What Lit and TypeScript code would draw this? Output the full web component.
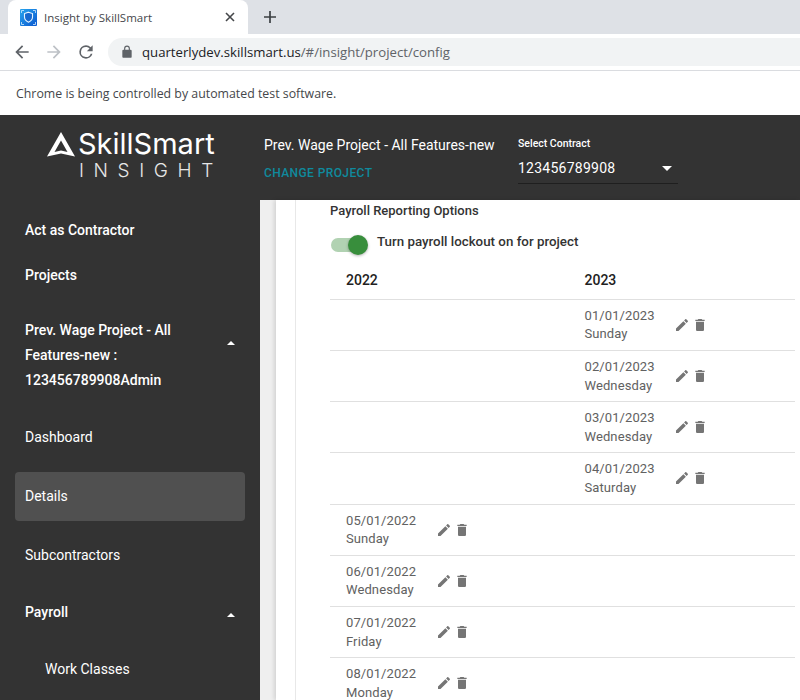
import { LitElement, html, css, svg } from 'lit'
import { customElement } from 'lit/decorators.js'

const editIcon = svg`<path d="M3 17.25V21h3.75L17.81 9.94l-3.75-3.75L3 17.25zM20.71 7.04c.39-.39.39-1.02 0-1.41l-2.34-2.34c-.39-.39-1.02-.39-1.41 0l-1.83 1.83 3.75 3.75 1.83-1.83z"/>`
const trashIcon = svg`<path d="M6 19c0 1.1.9 2 2 2h8c1.1 0 2-.9 2-2V7H6v12zM19 4h-3.5l-1-1h-5l-1 1H5v2h14V4z"/>`

interface LockRow {
  year: 2022 | 2023
  date: string
  day: string
}

const rows: LockRow[] = [
  { year: 2023, date: '01/01/2023', day: 'Sunday' },
  { year: 2023, date: '02/01/2023', day: 'Wednesday' },
  { year: 2023, date: '03/01/2023', day: 'Wednesday' },
  { year: 2023, date: '04/01/2023', day: 'Saturday' },
  { year: 2022, date: '05/01/2022', day: 'Sunday' },
  { year: 2022, date: '06/01/2022', day: 'Wednesday' },
  { year: 2022, date: '07/01/2022', day: 'Friday' },
  { year: 2022, date: '08/01/2022', day: 'Monday' },
]

@customElement('app-root')
export class AppRoot extends LitElement {
  static override styles = css`
    :host {
      display: flex;
      flex-direction: column;
      width: 800px;
      height: 700px;
      overflow: hidden;
      background: #fff;
      font-family: Roboto, sans-serif;
    }

    /* browser chrome */
    .tabstrip {
      flex: none;
      height: 34px;
      background: #dee1e6;
      display: flex;
      align-items: flex-end;
      padding-left: 8px;
    }
    .tab {
      width: 240px;
      height: 34px;
      box-sizing: border-box;
      background: #fff;
      border-radius: 8px 8px 0 0;
      display: flex;
      align-items: center;
      padding: 0 13px 0 12px;
      font: 11.5px 'Open Sans', sans-serif;
      color: #45474a;
    }
    .tab .fav {
      width: 17px;
      height: 17px;
      margin-right: 7px;
    }
    .tab .title {
      flex: 1;
    }
    .tab .close {
      width: 10px;
      height: 10px;
    }
    .newtab {
      width: 12px;
      height: 12px;
      margin: 0 0 11px 16px;
    }
    .toolbar {
      flex: none;
      height: 37px;
      box-sizing: border-box;
      border-bottom: 1px solid #dadce0;
      display: flex;
      align-items: center;
      padding: 0 0 0 12px;
      gap: 12px;
    }
    .toolbar > svg {
      width: 20px;
      height: 20px;
      flex: none;
    }
    .omnibox {
      flex: 1;
      height: 28px;
      background: #f1f3f4;
      border-radius: 14px 0 0 14px;
      display: flex;
      align-items: center;
      padding-left: 12px;
      font: 13.2px 'Open Sans', sans-serif;
      color: #5f6368;
    }
    .omnibox svg {
      width: 14px;
      height: 14px;
      margin-right: 8px;
    }
    .omnibox b {
      font-weight: 400;
      color: #202124;
    }
    .infobar {
      flex: none;
      height: 44px;
      display: flex;
      align-items: center;
      padding-left: 16px;
      box-sizing: border-box;
      font: 12.35px 'Open Sans', sans-serif;
      color: #45474a;
    }

    /* app header */
    .header {
      flex: none;
      height: 85px;
      background: #333;
      display: flex;
      color: #fff;
    }
    .logo {
      width: 264px;
      flex: none;
      box-sizing: border-box;
      padding: 17px 0 0 47px;
    }
    .logo-top {
      display: flex;
      align-items: center;
      height: 24px;
    }
    .logo-top svg {
      width: 28px;
      height: 25px;
      margin-right: 3px;
    }
    .brand {
      font: 400 29px/24px Inter, sans-serif;
    }
    .insight {
      margin-top: 6px;
      padding-left: 32px;
      font: 300 19px/18px Inter, sans-serif;
      letter-spacing: 9.6px;
      color: #e6e6e6;
    }
    .project {
      width: 254px;
      flex: none;
      padding-top: 21px;
    }
    .project-name {
      font-size: 14px;
      line-height: 18px;
    }
    .change {
      margin-top: 11px;
      font-size: 12px;
      font-weight: 500;
      line-height: 16px;
      letter-spacing: 0.4px;
      color: #0f8a9d;
    }
    .contract {
      width: 160px;
      flex: none;
      padding-top: 22px;
    }
    .contract label {
      display: block;
      font-size: 10.5px;
      font-weight: 500;
      line-height: 14px;
    }
    .select {
      margin-top: 4px;
      height: 26px;
      border-bottom: 1px solid #1f1f1f;
      display: flex;
      justify-content: space-between;
      align-items: center;
      padding: 0 6px 2px 0;
      font-size: 14px;
      letter-spacing: 0.25px;
    }
    .caret {
      width: 0;
      height: 0;
      border: 5px solid transparent;
      border-top-color: #fff;
      border-bottom: 0;
    }

    /* body */
    .body {
      flex: 1;
      min-height: 0;
      display: flex;
    }
    .side {
      width: 260px;
      flex: none;
      background: #333;
      color: #fff;
      padding: 17px 15px 0;
      box-sizing: border-box;
      font-size: 14px;
      font-weight: 500;
    }
    .item {
      display: flex;
      justify-content: space-between;
      align-items: center;
      padding: 0 10px;
      border-radius: 4px;
    }
    .item.selected {
      box-sizing: border-box;
      padding-bottom: 2px;
      background: #505050;
      font-weight: 400;
    }
    .item.plain {
      font-weight: 400;
    }
    .item.sub {
      padding-left: 30px;
      font-weight: 400;
    }
    .up {
      width: 0;
      height: 0;
      margin: 6px 0 0 0;
      border: 4px solid transparent;
      border-bottom-color: #fff;
      border-top: 0;
    }
    .gutter {
      width: 16px;
      flex: none;
      background: #efefef;
    }
    .outer {
      flex: 1;
      min-width: 0;
      background: #fff;
      padding-left: 19px;
      box-shadow: -2px 0 4px rgba(0, 0, 0, 0.12);
    }
    .card {
      height: 100%;
      border-left: 1px solid #e8e8e8;
      padding: 3px 5px 0 34px;
      box-sizing: border-box;
    }
    .section {
      font-size: 13px;
      font-weight: 500;
      line-height: 16px;
      color: #333;
    }
    .lockout {
      display: flex;
      align-items: center;
      margin-top: 11px;
      height: 22px;
      font-size: 13.33px;
      font-weight: 500;
      color: #333;
    }
    .switch {
      position: relative;
      width: 33px;
      height: 14px;
      margin: 8px 13px 0 1px;
      border-radius: 7px;
      background: #b1d2b2;
    }
    .switch::after {
      content: '';
      position: absolute;
      right: -4px;
      top: -3px;
      width: 20px;
      height: 20px;
      border-radius: 50%;
      background: #388e3c;
      box-shadow: 0 1px 3px rgba(0, 0, 0, 0.3);
    }
    .grid {
      margin-top: 7px;
    }
    .row {
      display: grid;
      grid-template-columns: 238.5px 1fr;
      padding-left: 16px;
      border-bottom: 1px solid #e0e0e0;
      height: 50.2px;
      align-items: center;
      font-size: 13px;
      color: #616161;
    }
    .row.head {
      height: 36.8px;
      padding-top: 3px;
      font-size: 14px;
      font-weight: 500;
      color: #212121;
    }
    .cell {
      display: flex;
      align-items: center;
    }
    .date {
      width: 89.6px;
      padding-top: 1px;
      line-height: 18.5px;
      letter-spacing: 0.1px;
    }
    .cell svg {
      width: 16px;
      height: 16px;
      fill: #757575;
      margin: 0 2px 0 0;
    }
  `

  private renderCell(r: LockRow, year: number) {
    if (r.year !== year) return html`<div></div>`
    return html`
      <div class="cell">
        <div class="date">${r.date}<br />${r.day}</div>
        <svg viewBox="0 0 24 24">${editIcon}</svg>
        <svg viewBox="0 0 24 24">${trashIcon}</svg>
      </div>
    `
  }

  private renderChrome() {
    return html`
      <div class="tabstrip">
        <div class="tab">
          <svg class="fav" viewBox="0 0 17 17">
            <defs>
              <linearGradient id="fav" x1="0" y1="0" x2="1" y2="1">
                <stop offset="0" stop-color="#27a5ee" />
                <stop offset="1" stop-color="#0b57cf" />
              </linearGradient>
            </defs>
            <rect width="17" height="17" rx="1" fill="url(#fav)" />
            <path d="M1.500 4V1.500H4M13 1.500h2.500V4M1.500 13v2.500H4M13 15.500h2.500V13" fill="none" stroke="#cfeaff" stroke-width="0.800" />
            <path d="M8.500 3.200l4 1.400v3.400c0 2.400-1.700 4.100-4 5.200-2.300-1.100-4-2.800-4-5.200V4.600z" fill="#1668cf" stroke="#e6f4ff" stroke-width="1.100" />
          </svg>
          <span class="title">Insight by SkillSmart</span>
          <svg class="close" viewBox="0 0 10 10">
            <path d="M1 1l8 8M9 1l-8 8" stroke="#45474a" stroke-width="1.600" />
          </svg>
        </div>
        <svg class="newtab" viewBox="0 0 12 12">
          <path d="M6 0v12M0 6h12" stroke="#3c4043" stroke-width="1.700" />
        </svg>
      </div>
      <div class="toolbar">
        <svg viewBox="0 0 24 24" fill="#5f6368">
          <path d="M20 11H7.830l5.590-5.590L12 4l-8 8 8 8 1.410-1.410L7.830 13H20v-2z" />
        </svg>
        <svg viewBox="0 0 24 24" fill="#bdc1c6">
          <path d="M12 4l-1.410 1.410L16.170 11H4v2h12.170l-5.580 5.590L12 20l8-8z" />
        </svg>
        <svg viewBox="0 0 24 24" fill="#5f6368">
          <path d="M17.650 6.350A7.960 7.960 0 0 0 12 4a8 8 0 1 0 7.730 10h-2.080A6 6 0 1 1 12 6c1.660 0 3.140.69 4.220 1.780L13 11h7V4l-2.350 2.350z" />
        </svg>
        <div class="omnibox">
          <svg viewBox="0 0 24 24" fill="#5f6368">
            <path d="M18 8h-1V6A5 5 0 0 0 7 6v2H6a2 2 0 0 0-2 2v10c0 1.100.9 2 2 2h12a2 2 0 0 0 2-2V10a2 2 0 0 0-2-2zM9 6a3 3 0 0 1 6 0v2H9V6z" />
          </svg>
          <span><b>quarterlydev.skillsmart.us</b>/#/insight/project/config</span>
        </div>
      </div>
      <div class="infobar">Chrome is being controlled by automated test software.</div>
    `
  }

  private renderHeader() {
    return html`
      <div class="header">
        <div class="logo">
          <div class="logo-top">
            <svg viewBox="0 0 28 25">
              <path fill-rule="evenodd" fill="#fff" d="M14 0L28 24.500 14 21.500 0 24.500zM14 8.500L7.500 20 14 18.600 20.500 20z" />
            </svg>
            <span class="brand">SkillSmart</span>
          </div>
          <div class="insight">INSIGHT</div>
        </div>
        <div class="project">
          <div class="project-name">Prev. Wage Project - All Features-new</div>
          <div class="change">CHANGE PROJECT</div>
        </div>
        <div class="contract">
          <label>Select Contract</label>
          <div class="select">123456789908<span class="caret"></span></div>
        </div>
      </div>
    `
  }

  private renderSide() {
    return html`
      <div class="side">
        <div class="item" style="height:26px">Act as Contractor</div>
        <div class="item" style="height:26px;margin-top:19px">Projects</div>
        <div class="item" style="margin-top:30px;line-height:25px">
          <span>Prev. Wage Project - All<br />Features-new :<br />123456789908Admin</span>
          <span class="up" style="margin:0 0 25px 0"></span>
        </div>
        <div class="item plain" style="height:26px;margin-top:31px">Dashboard</div>
        <div class="item selected" style="height:49px;margin-top:22px">Details</div>
        <div class="item plain" style="height:26px;margin-top:21px">Subcontractors</div>
        <div class="item" style="height:26px;margin-top:31px">Payroll<span class="up"></span></div>
        <div class="item sub" style="height:26px;margin-top:31px">Work Classes</div>
      </div>
    `
  }

  override render() {
    return html`
      ${this.renderChrome()} ${this.renderHeader()}
      <div class="body">
        ${this.renderSide()}
        <div class="gutter"></div>
        <div class="outer">
          <div class="card">
            <div class="section">Payroll Reporting Options</div>
            <div class="lockout">
              <span class="switch"></span>
              Turn payroll lockout on for project
            </div>
            <div class="grid">
              <div class="row head"><div>2022</div><div>2023</div></div>
              ${rows.map(
                (r) => html`
                  <div class="row">${this.renderCell(r, 2022)}${this.renderCell(r, 2023)}</div>
                `,
              )}
            </div>
          </div>
        </div>
      </div>
    `
  }
}
